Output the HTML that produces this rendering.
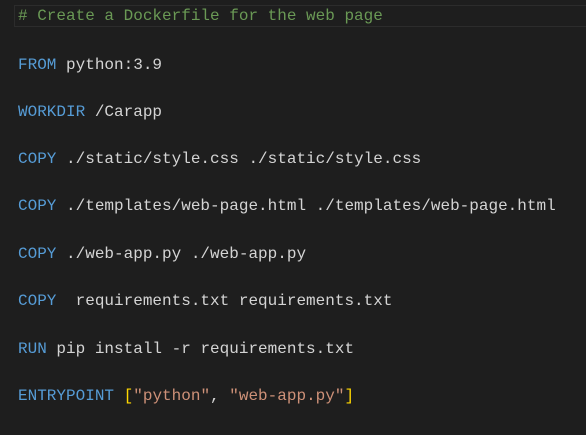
<!DOCTYPE html>
<html><head><style>
body{margin:0;background:#1e1e1e;width:586px;height:435px;overflow:hidden;position:relative;font-family:"Liberation Mono",monospace;font-size:16px;}
.l{position:absolute;left:18px;white-space:pre;line-height:20px;color:#d4d4d4;}
.c{color:#6a9955}.k{color:#569cd6}.s{color:#ce9178}.b{color:#ffd700}
.hl{position:absolute;left:14px;top:5px;width:580px;height:22px;border:1px solid #2c2c2c;box-sizing:border-box;}
</style></head><body>
<div class="hl"></div>
<div class="l" style="top:-15px">  ``</div>
<div class="l c" style="top:6px"># Create a Dockerfile for the web page</div>
<div class="l" style="top:55px"><span class="k">FROM</span> python:3.9</div>
<div class="l" style="top:102px"><span class="k">WORKDIR</span> /Carapp</div>
<div class="l" style="top:149px"><span class="k">COPY</span> ./static/style.css ./static/style.css</div>
<div class="l" style="top:196px"><span class="k">COPY</span> ./templates/web-page.html ./templates/web-page.html</div>
<div class="l" style="top:244px"><span class="k">COPY</span> ./web-app.py ./web-app.py</div>
<div class="l" style="top:291px"><span class="k">COPY</span>  requirements.txt requirements.txt</div>
<div class="l" style="top:339px"><span class="k">RUN</span> pip install -r requirements.txt</div>
<div class="l" style="top:386px"><span class="k">ENTRYPOINT</span> <span class="b">[</span><span class="s">"python"</span>, <span class="s">"web-app.py"</span><span class="b">]</span></div>
</body></html>
